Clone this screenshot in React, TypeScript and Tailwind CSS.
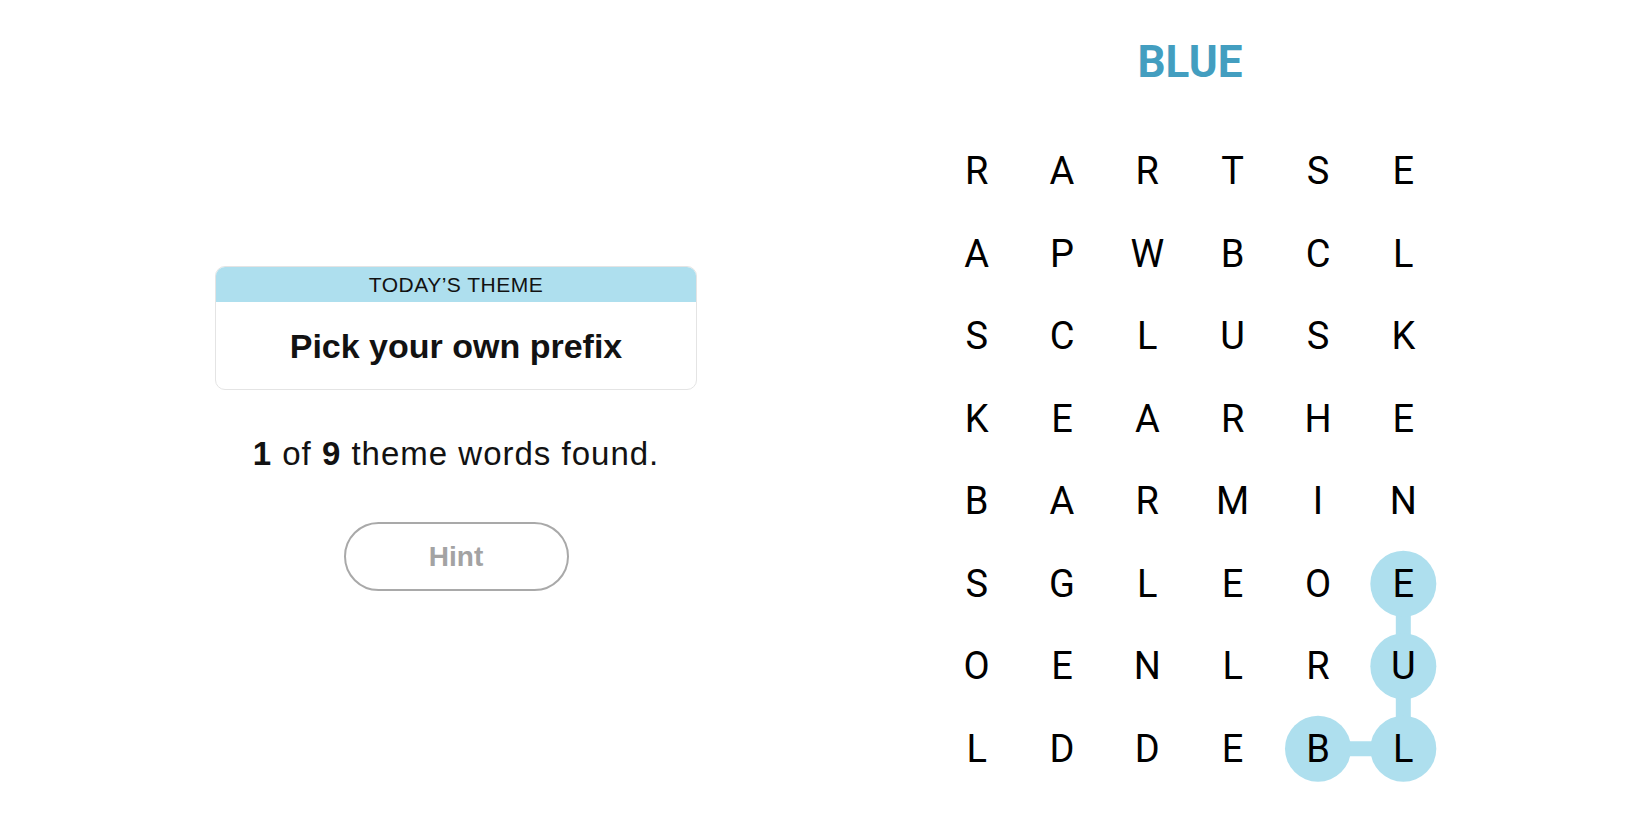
import React from 'react';

const GRID = [
  'RARTSE',
  'APWBCL',
  'SCLUSK',
  'KEARHE',
  'BARMIN',
  'SGLEOE',
  'OENLRU',
  'LDDEBL',
];

const CELL_W = 85.33;
const CELL_H = 82.5;

// found word: B-L-U-E, path drawn from E down to L then across to B
const FOUND: [number, number][] = [
  [5, 5],
  [5, 6],
  [5, 7],
  [4, 7],
];

function Board() {
  const cx = (c: number) => c * CELL_W + CELL_W / 2;
  const cy = (r: number) => r * CELL_H + CELL_H / 2;

  return (
    <div className="relative w-[512px] h-[660px]">
      <svg className="absolute inset-0" width={512} height={660}>
        {FOUND.slice(1).map(([c, r], i) => {
          const [pc, pr] = FOUND[i];
          return (
            <line
              key={i}
              x1={cx(pc)}
              y1={cy(pr)}
              x2={cx(c)}
              y2={cy(r)}
              stroke="#aedfee"
              strokeWidth={15}
            />
          );
        })}
        {FOUND.map(([c, r]) => (
          <circle key={`${c}-${r}`} cx={cx(c)} cy={cy(r)} r={33} fill="#aedfee" />
        ))}
      </svg>
      <div className="relative grid grid-cols-6">
        {GRID.map((row, r) =>
          row.split('').map((ch, c) => (
            <div
              key={`${r}-${c}`}
              className="flex items-center justify-center h-[82.5px] text-[38px] leading-none text-black"
            >
              {ch}
            </div>
          ))
        )}
      </div>
    </div>
  );
}

export default function App() {
  return (
    <div className="flex w-full h-[825px] bg-white overflow-hidden">
      {/* Left panel */}
      <div
        className="w-[912px] flex flex-col items-center pt-[266px]"
        style={{ fontFamily: '"Liberation Sans", Arial, sans-serif' }}
      >
        <div className="w-[482px] rounded-[10px] border border-[#e4e4e4] overflow-hidden">
          <div className="h-[35px] bg-[#aedfee] flex items-center justify-center text-[21px] tracking-[0.5px] uppercase text-[#121212]">
            Today’s Theme
          </div>
          <div className="pt-[24px] pb-[23px] text-center text-[34px] leading-[40px] font-bold text-[#121212]">
            Pick your own prefix
          </div>
        </div>

        <p className="mt-[44px] text-[33px] leading-[40px] tracking-[1px] text-[#121212]">
          <span className="font-bold">1</span> of <span className="font-bold">9</span> theme words found.
        </p>

        <button className="mt-[48px] w-[225px] h-[69px] rounded-full border-2 border-[#a9a9a9] bg-white text-[28px] font-bold text-[#a3a3a3]">
          Hint
        </button>
      </div>

      {/* Right panel */}
      <div
        className="w-[556px] flex flex-col items-center"
        style={{ fontFamily: 'Roboto, "Liberation Sans", sans-serif' }}
      >
        <h1 className="mt-[40px] text-[44px] leading-[44px] font-bold text-[#439ec0]">BLUE</h1>
        <div className="mt-[46px]">
          <Board />
        </div>
      </div>
    </div>
  );
}
